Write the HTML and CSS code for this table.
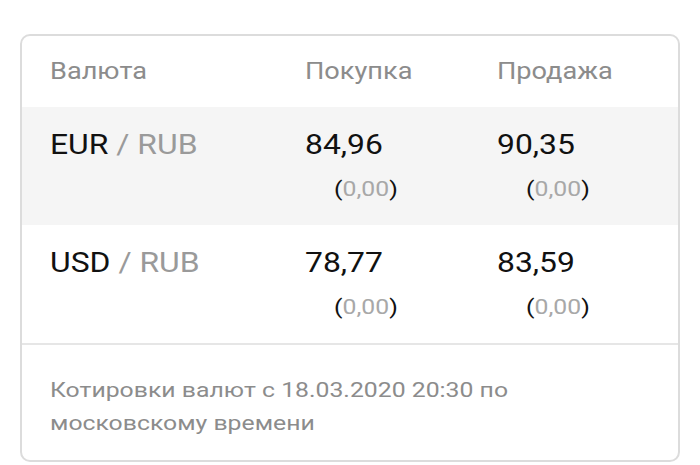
FILE: index.html
```html
<!DOCTYPE html>
<html lang="ru">
<head>
<meta charset="utf-8">
<link rel="stylesheet" href="styles.css">
</head>
<body>
<div class="card">
  <div class="row head">
    <div class="cell"><span class="t">Валюта</span></div>
    <div class="cell"><span class="t">Покупка</span></div>
    <div class="cell"><span class="t">Продажа</span></div>
  </div>
  <div class="row shaded">
    <div class="cell pair"><span class="t">EUR <span class="quote">/ RUB</span></span></div>
    <div class="cell"><div class="val"><span class="t">84,96</span></div><div class="chg"><span class="t">(<span class="num">0,00</span>)</span></div></div>
    <div class="cell"><div class="val"><span class="t">90,35</span></div><div class="chg"><span class="t">(<span class="num">0,00</span>)</span></div></div>
  </div>
  <div class="row last">
    <div class="cell pair"><span class="t">USD <span class="quote">/ RUB</span></span></div>
    <div class="cell"><div class="val"><span class="t">78,77</span></div><div class="chg"><span class="t">(<span class="num">0,00</span>)</span></div></div>
    <div class="cell"><div class="val"><span class="t">83,59</span></div><div class="chg"><span class="t">(<span class="num">0,00</span>)</span></div></div>
  </div>
  <div class="foot"><span class="t">Котировки валют с 18.03.2020 20:30 по<br>московскому времени</span></div>
</div>
</body>
</html>
```
FILE: styles.css
```css
html, body {
  margin: 0;
  padding: 0;
  background: #ffffff;
}
body {
  font-family: Roboto, "Noto Sans", sans-serif;
  color: #111111;
}
.card {
  margin: 34px 20px 0;
  border: 2px solid #dcdcdc;
  border-radius: 10px;
  overflow: hidden;
}
.t {
  display: inline-block;
  transform: scaleX(1.18);
  transform-origin: 0 50%;
  white-space: nowrap;
}
.row {
  display: grid;
  grid-template-columns: 255px 192px 1fr;
  padding-left: 28px;
}
.head {
  padding-top: 22px;
  padding-bottom: 22px;
  font-size: 23px;
  line-height: 27px;
  color: #8c8c8c;
}
.shaded, .last {
  padding-top: 22px;
  padding-bottom: 22px;
}
.shaded {
  background: #f5f5f5;
}
.last {
  border-bottom: 2px solid #e6e6e6;
}
.pair, .val {
  font-size: 27px;
  line-height: 32px;
}
.quote {
  color: #9a9a9a;
}
.chg {
  margin-top: 14px;
  padding-left: 29px;
  font-size: 21px;
  line-height: 28px;
  color: #111111;
}
.num {
  color: #a8a8a8;
}
.foot {
  padding: 29px 28px 20px;
  font-size: 21px;
  line-height: 33px;
  color: #8c8c8c;
}
```
